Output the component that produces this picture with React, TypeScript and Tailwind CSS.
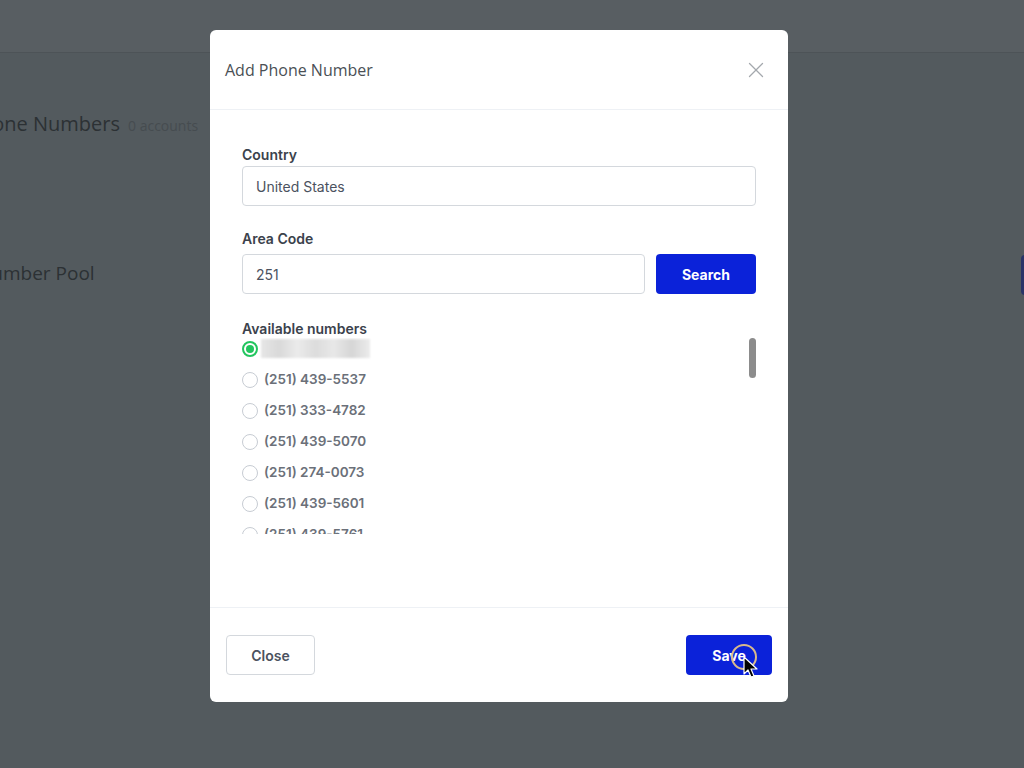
import React, { useState } from "react";
import { X } from "lucide-react";

const numbers = [
  "(251) 439-5537",
  "(251) 333-4782",
  "(251) 439-5070",
  "(251) 274-0073",
  "(251) 439-5601",
  "(251) 439-5761",
  "(251) 439-5812",
];

const Radio: React.FC<{ checked?: boolean }> = ({ checked }) =>
  checked ? (
    <span className="flex h-4 w-4 shrink-0 items-center justify-center rounded-full border-2 border-[#22c55e] bg-white">
      <span className="h-2 w-2 rounded-full bg-[#22c55e]" />
    </span>
  ) : (
    <span className="h-4 w-4 shrink-0 rounded-full border border-[#c7ccd3] bg-white" />
  );

const App: React.FC = () => {
  const [selected] = useState(-1);

  return (
    <div
      className="relative h-[768px] w-[1024px] overflow-hidden bg-[#535a5e]"
      style={{ fontFamily: "'Open Sans', 'Noto Sans', sans-serif" }}
    >
      {/* Page behind the overlay */}
      <div className="h-[53px] border-b border-[#4d5357] bg-[#585e62]" />
      <div className="flex items-baseline gap-2 pt-[56px] -ml-[32px]">
        <span className="text-[20px] text-[#2c3134]">Phone Numbers</span>
        <span className="text-[14px] text-[#464c50]">0 accounts</span>
      </div>
      <div className="mt-[113px] flex items-center justify-between -ml-[23px] -mr-[60px]">
        <span className="text-[19px] text-[#2c3134]">Number Pool</span>
        <span className="mt-[3px] h-10 w-[63px] rounded bg-[#2a3468]" />
      </div>

      {/* Modal */}
      <div className="absolute left-[210px] top-[30px] flex h-[672px] w-[578px] flex-col rounded-md bg-white">
        <div className="flex h-[80px] items-center justify-between border-b border-[#eef1f5] pl-[15px] pr-[19px]">
          <span className="text-[16px] text-[#4a4f55]">Add Phone Number</span>
          <X size={26} strokeWidth={1.2} className="text-[#a4a8ad]" />
        </div>

        <div
          className="flex-1 px-8 pt-[37px]"
          style={{ fontFamily: "Inter, 'Noto Sans', sans-serif" }}
        >
          <label className="block text-[14px] font-semibold leading-4 text-[#3b424c]">Country</label>
          <div className="mt-[3px] flex h-10 items-center rounded border border-[#d4d8dd] px-[13px] text-[14px] text-[#4b5260]">
            United States
          </div>

          <label className="mt-[25px] block text-[14px] font-semibold leading-4 text-[#3b424c]">Area Code</label>
          <div className="mt-[7px] flex gap-[11px]">
            <div className="flex h-10 flex-1 items-center rounded border border-[#d4d8dd] px-[13px] text-[14px] text-[#4b5260]">
              251
            </div>
            <button className="h-10 w-[100px] rounded bg-[#0b22d9] text-[14px] font-bold text-white">
              Search
            </button>
          </div>

          <label className="mt-[27px] block text-[14px] font-semibold leading-4 text-[#3b424c]">
            Available numbers
          </label>
          <div className="mt-[1px] flex h-[196px] overflow-hidden">
            <div className="flex-1">
              <div className="flex h-[21px] items-center gap-[3px]">
                <Radio checked={selected === -1} />
                <span className="h-[19px] w-[109px] bg-[linear-gradient(90deg,#e6e6e6,#d9d9d9,#ebebeb,#dcdcdc,#e8e8e8,#d6d6d6,#ececec)] blur-[1px]" />
              </div>
              {numbers.map((n, i) => (
                <div key={n} className="mt-[10px] flex h-[21px] items-center gap-[6px]">
                  <Radio checked={selected === i} />
                  <span className="text-[13.5px] font-semibold text-[#6b7079]">{n}</span>
                </div>
              ))}
            </div>
            <div className="w-[7px] pt-0">
              <div className="h-[40px] w-[7px] rounded-full bg-[#8c8c8c]" />
            </div>
          </div>
        </div>

        <div
          className="flex h-[95px] items-center justify-between border-t border-[#eef1f5] px-4"
          style={{ fontFamily: "Inter, 'Noto Sans', sans-serif" }}
        >
          <button className="h-10 w-[89px] rounded border border-[#d4d8dd] bg-white text-[14px] font-semibold text-[#4b5260]">
            Close
          </button>
          <button className="h-10 w-[86px] rounded bg-[#0b22d9] text-[14px] font-bold text-white">
            Save
          </button>
        </div>
      </div>

      {/* Click indicator + cursor */}
      <span className="absolute left-[731px] top-[644px] h-[26px] w-[26px] rounded-full border-2 border-[#d8b98c]" />
      <svg className="absolute left-[743px] top-[656px]" width="16" height="24" viewBox="0 0 16 24">
        <path
          d="M1 1 L1 18 L5 14 L8 21 L11 20 L8 13 L14 13 Z"
          fill="#000"
          stroke="#fff"
          strokeWidth="1.2"
          strokeLinejoin="round"
        />
      </svg>
    </div>
  );
};

export default App;
